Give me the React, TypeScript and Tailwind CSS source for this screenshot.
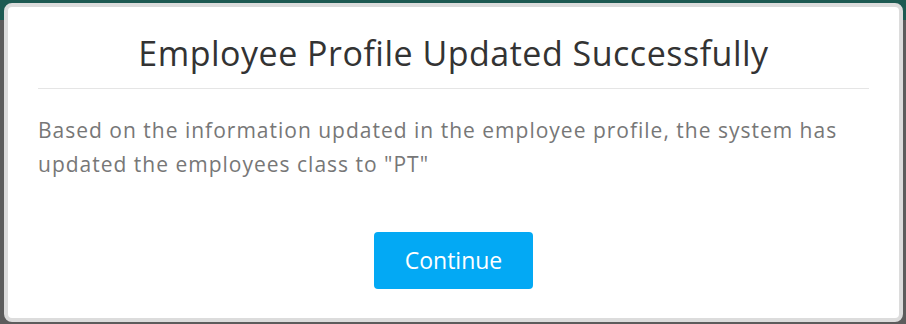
export default function App() {
  return (
    <div className="w-[906px] h-[324px] bg-[#5c5c5c] relative overflow-hidden" style={{ fontFamily: "'Open Sans', Lato, sans-serif" }}>
      <div className="absolute left-0 top-0 w-full h-[20px] bg-[#1d5a52]" />
      <div className="absolute left-[4px] top-[3px] w-[899px] h-[319px] rounded-[8px] border-[4px] border-[#dcdcdc] bg-white flex flex-col">
        <div className="mx-[30px] pt-[24px] pb-[13px] border-b border-[#e5e5e5] text-center">
          <h1 className="text-[34px] leading-[44px] tracking-[0.5px] text-[#333333]">Employee Profile Updated Successfully</h1>
        </div>
        <p className="mx-[30px] mt-[24px] text-[21px] leading-[34px] tracking-[1px] text-[#777777]">
          Based on the information updated in the employee profile, the system has updated the employees class to "PT"
        </p>
        <div className="flex justify-center mt-[51px]">
          <button className="w-[159px] h-[57px] rounded-[4px] bg-[#03a9f4] text-white text-[23px]">Continue</button>
        </div>
      </div>
    </div>
  );
}
